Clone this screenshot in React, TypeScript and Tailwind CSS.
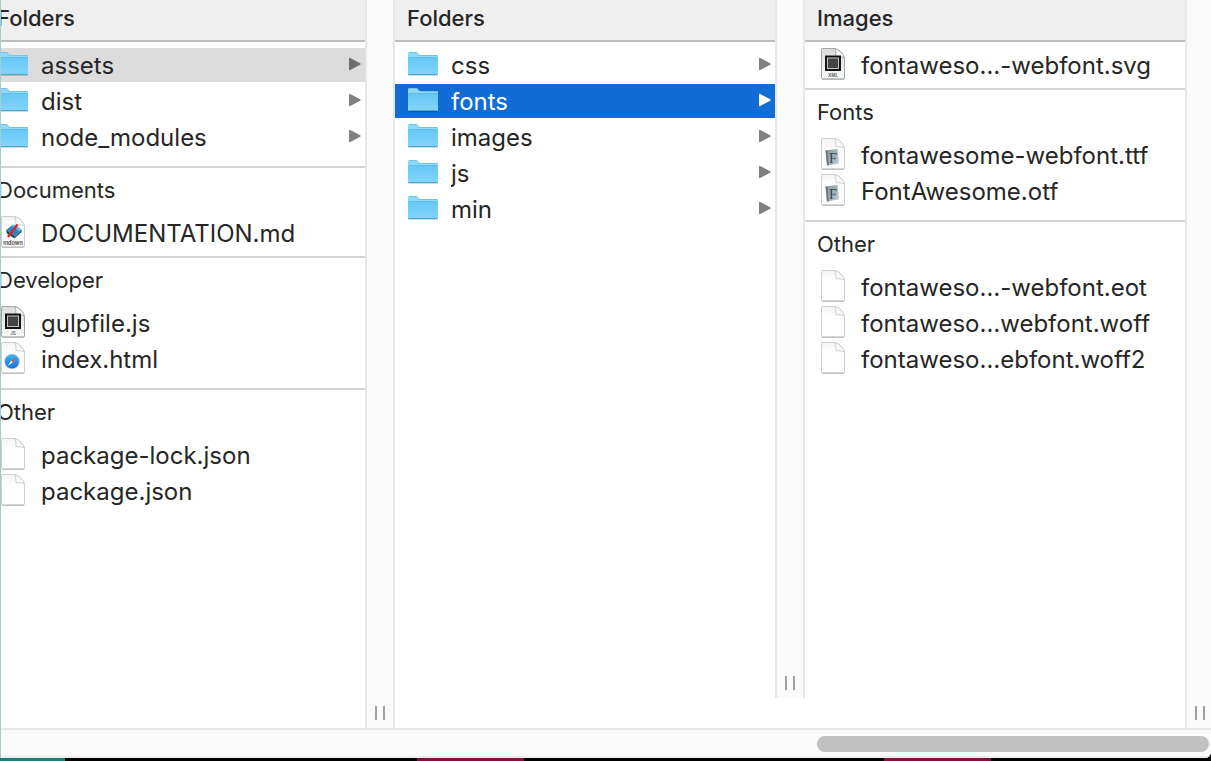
import type { ReactNode } from "react";

type Kind = "folder" | "blank" | "xml" | "js" | "html" | "font" | "mdown";
type Entry = { name: string; kind: Kind; state?: "active" | "parent" };
type Group = { title: string; entries: Entry[] };

const projectGroups: Group[] = [
  {
    title: "Folders",
    entries: [
      { name: "assets", kind: "folder", state: "parent" },
      { name: "dist", kind: "folder" },
      { name: "node_modules", kind: "folder" },
    ],
  },
  { title: "Documents", entries: [{ name: "DOCUMENTATION.md", kind: "mdown" }] },
  {
    title: "Developer",
    entries: [
      { name: "gulpfile.js", kind: "js" },
      { name: "index.html", kind: "html" },
    ],
  },
  {
    title: "Other",
    entries: [
      { name: "package-lock.json", kind: "blank" },
      { name: "package.json", kind: "blank" },
    ],
  },
];

const assetGroups: Group[] = [
  {
    title: "Folders",
    entries: [
      { name: "css", kind: "folder" },
      { name: "fonts", kind: "folder", state: "active" },
      { name: "images", kind: "folder" },
      { name: "js", kind: "folder" },
      { name: "min", kind: "folder" },
    ],
  },
];

const fontGroups: Group[] = [
  { title: "Images", entries: [{ name: "fontaweso…-webfont.svg", kind: "xml" }] },
  {
    title: "Fonts",
    entries: [
      { name: "fontawesome-webfont.ttf", kind: "font" },
      { name: "FontAwesome.otf", kind: "font" },
    ],
  },
  {
    title: "Other",
    entries: [
      { name: "fontaweso…-webfont.eot", kind: "blank" },
      { name: "fontaweso…webfont.woff", kind: "blank" },
      { name: "fontaweso…ebfont.woff2", kind: "blank" },
    ],
  },
];

function Gradients() {
  return (
    <svg className="absolute size-0" aria-hidden="true">
      <defs>
        <linearGradient id="folder" x1="0" y1="0" x2="0" y2="1">
          <stop offset="0" stopColor="#66c8f6" />
          <stop offset="1" stopColor="#82d5fa" />
        </linearGradient>
        <linearGradient id="sheet" x1="0" y1="0" x2="0" y2="1">
          <stop offset="0" stopColor="#f3f3f3" />
          <stop offset="0.35" stopColor="#ffffff" />
        </linearGradient>
        <linearGradient id="code" x1="0" y1="0" x2="0" y2="1">
          <stop offset="0" stopColor="#dcdcdc" />
          <stop offset="1" stopColor="#fafafa" />
        </linearGradient>
        <linearGradient id="tile" x1="0" y1="0" x2="1" y2="1">
          <stop offset="0" stopColor="#84939b" />
          <stop offset="1" stopColor="#c2d0d6" />
        </linearGradient>
        <linearGradient id="compass" x1="0" y1="0" x2="0" y2="1">
          <stop offset="0" stopColor="#35b8f5" />
          <stop offset="1" stopColor="#1a6fe0" />
        </linearGradient>
      </defs>
    </svg>
  );
}

function FolderIcon() {
  return (
    <svg className="size-8 flex-none" viewBox="0 0 32 32" aria-hidden="true">
      <rect x="1" y="26" width="30" height="2" rx="1" fill="#000" opacity="0.16" />
      <path d="M1 5.500Q1 4 2.500 4H9Q10 4 10.800 5L11.500 6Q12 7 13.500 7H30Q31 7 31 8V26Q31 27 30 27H2Q1 27 1 26Z" fill="#8ed8f8" />
      <path d="M1 10H31V26Q31 27 30 27H2Q1 27 1 26Z" fill="url(#folder)" />
      <path d="M1.500 9.500H30.500" stroke="#62bce8" strokeWidth="1" />
      <path d="M1.500 26.500H30.500" stroke="#4fa5cf" strokeWidth="1" />
      <path d="M2 4.500H9.500Q10.500 5 11.500 6.800Q12 7.500 13 7.500H30.500" fill="none" stroke="#70c2e8" strokeWidth="1" />
    </svg>
  );
}

function Artwork({ kind }: { kind: Kind }) {
  if (kind === "xml" || kind === "js") {
    return (
      <>
        <rect x="8" y="7.500" width="16" height="15.500" fill="#141414" />
        <rect x="10.500" y="10" width="11" height="10.500" fill="#444" stroke="#c4c4c4" />
        <text x="16" y="28.500" textAnchor="middle" fontSize={4.5} fontWeight={600} fill="#555">
          {kind === "xml" ? "XML" : "JS"}
        </text>
      </>
    );
  }
  if (kind === "html") {
    return (
      <>
        <circle cx="15" cy="19.500" r="7.800" fill="#ccd2d9" />
        <circle cx="15" cy="19.500" r="7" fill="url(#compass)" />
        <path d="M19.500 15L15.800 20.500L14.200 18.800Z" fill="#f0483e" />
        <path d="M10.500 24L14.200 18.800L15.800 20.500Z" fill="#fff" />
      </>
    );
  }
  if (kind === "font") {
    return (
      <>
        <path d="M8.500 12.500L20.500 11L22 25.500L10 27.500Z" fill="url(#tile)" />
        <path d="M8.500 12.500L10 27.500L12 27.200L10.500 12.300Z" fill="#6d7b83" />
        <text x="16" y="24.500" textAnchor="middle" fontSize={14} className="font-['Liberation_Serif',serif]" fill="#35424a">
          F
        </text>
      </>
    );
  }
  if (kind === "mdown") {
    return (
      <>
        <path d="M9 14L16 8.500L24.500 13.500L18 20.500Z" fill="#2b86bd" />
        <path d="M9 14L18 20.500L17.500 22.500L10 17.500Z" fill="#14364c" />
        <path d="M18 20.500L24.500 13.500V16L17.500 22.500Z" fill="#1d5575" />
        <path d="M16 8.500L24.500 13.500L22.500 15.500L14.500 10Z" fill="#63b5dd" />
        <path d="M11 21L20.500 8.500" stroke="#d7262b" strokeWidth="2.400" />
        <text x="16" y="28.500" textAnchor="middle" fontSize={5.5} fontWeight={600} fill="#444">
          mdown
        </text>
      </>
    );
  }
  return null;
}

function DocIcon({ kind }: { kind: Kind }) {
  const code = kind === "xml" || kind === "js";
  return (
    <svg className="size-8 flex-none" viewBox="0 0 32 32" aria-hidden="true">
      <path
        d="M5 0.500H17.500Q21 1 24 4.200Q27 7.500 27.500 10.500V30Q27.500 31 26.500 31H5.500Q4.500 31 4.500 30V1.500Q4.500 0.500 5 0.500Z"
        fill={code ? "url(#code)" : "url(#sheet)"}
        stroke={code ? "#a4a4a4" : "#cfcfcf"}
      />
      <path
        d="M17.500 0.500Q19.200 2 19 8.800Q25.500 8.300 27.500 10.500Q27 7.500 24 4.200Q21 1 17.500 0.500Z"
        fill="#fbfbfb"
        stroke={code ? "#a0a0a0" : "#c8c8c8"}
        strokeWidth="0.900"
      />
      <path d="M5 31.200H27" stroke="#aeaeae" strokeWidth="0.900" />
      <Artwork kind={kind} />
    </svg>
  );
}

function Arrow() {
  return (
    <svg className="size-4 flex-none" viewBox="0 0 16 16" aria-hidden="true">
      <path d="M3 2.600V13.400Q3 14.600 4.200 14L14.200 8.800Q15.200 8 14.200 7.200L4.200 2Q3 1.400 3 2.600Z" fill="currentColor" />
    </svg>
  );
}

function Row({ entry }: { entry: Entry }) {
  const tone =
    entry.state === "active"
      ? "bg-[#116cd6] text-white"
      : entry.state === "parent"
        ? "bg-[#dcdcdc] text-[#262626]"
        : "text-[#262626]";
  const arrowTone =
    entry.state === "active" ? "text-white" : entry.state === "parent" ? "text-[#6e6e6e]" : "text-[#808080]";
  return (
    <li className="pb-0.5">
      <button type="button" className={`flex h-[34px] w-full items-center gap-3 pr-[3px] pb-0.5 pl-3 text-left ${tone}`}>
        {entry.kind === "folder" ? <FolderIcon /> : <DocIcon kind={entry.kind} />}
        <span className="min-w-0 flex-1 truncate pt-1 text-2xl leading-7">{entry.name}</span>
        {entry.kind === "folder" && (
          <span className={arrowTone}>
            <Arrow />
          </span>
        )}
      </button>
    </li>
  );
}

function Column({ groups }: { groups: Group[] }) {
  return (
    <section className="w-[380px] flex-none bg-white">
      {groups.map((group, index) => {
        const last = index === groups.length - 1;
        const space = group.entries.length > 1 ? "pb-2.5" : "pb-1";
        return (
          <div key={group.title} className={last ? "" : `border-b-2 border-[#d3d3d3] ${space}`}>
            {index === 0 ? (
              <h2 className="mb-1.5 border-b-2 border-[#bebebe] bg-[#efefef] px-3 pb-1 text-[22px] leading-9 font-medium">
                {group.title}
              </h2>
            ) : (
              <h2 className="px-3 pb-1 text-[22px] leading-[44px]">{group.title}</h2>
            )}
            <ul>
              {group.entries.map((entry) => (
                <Row key={entry.name} entry={entry} />
              ))}
            </ul>
          </div>
        );
      })}
    </section>
  );
}

function Divider({ short = false }: { short?: boolean }) {
  return (
    <div className={short ? "flex flex-none pb-[30px]" : "flex flex-none"}>
      <div
        role="separator"
        aria-orientation="vertical"
        className="flex w-[30px] cursor-col-resize items-end justify-center gap-1.5 border-x-2 border-[#e7e7e7] bg-[#fafafa] pb-2"
      >
        <span className="h-3.5 w-0.5 bg-[#a0a0a0]" />
        <span className="h-3.5 w-0.5 bg-[#a0a0a0]" />
      </div>
    </div>
  );
}

function Browser({ children }: { children: ReactNode }) {
  return (
    <main className="flex min-h-0 flex-1 flex-col overflow-hidden rounded-br-md border-l border-[#a9cbc7] bg-white">
      <div className="flex min-h-0 flex-1 overflow-hidden">{children}</div>
      <div className="flex flex-none justify-end border-y-2 border-t-[#e7e7e7] border-b-[#ededed] bg-[#fafafa] pt-1.5 pr-0.5 pb-1">
        <div className="h-4 w-[392px] rounded-full bg-[#c1c1c1]" />
      </div>
    </main>
  );
}

export default function App() {
  return (
    <div className="flex h-screen flex-col overflow-hidden bg-black font-['Inter',sans-serif] text-[#262626]">
      <Gradients />
      <Browser>
        <div className="-ml-4 flex flex-none">
          <Column groups={projectGroups} />
          <Divider />
          <Column groups={assetGroups} />
          <Divider short />
          <Column groups={fontGroups} />
          <Divider />
        </div>
      </Browser>
      <div className="flex h-[3px] flex-none">
        <span className="w-[65px] bg-[#1d8072]" />
        <span className="ml-[352px] w-[107px] bg-[#85103a]" />
        <span className="ml-[360px] w-[107px] bg-[#85103a]" />
      </div>
    </div>
  );
}
